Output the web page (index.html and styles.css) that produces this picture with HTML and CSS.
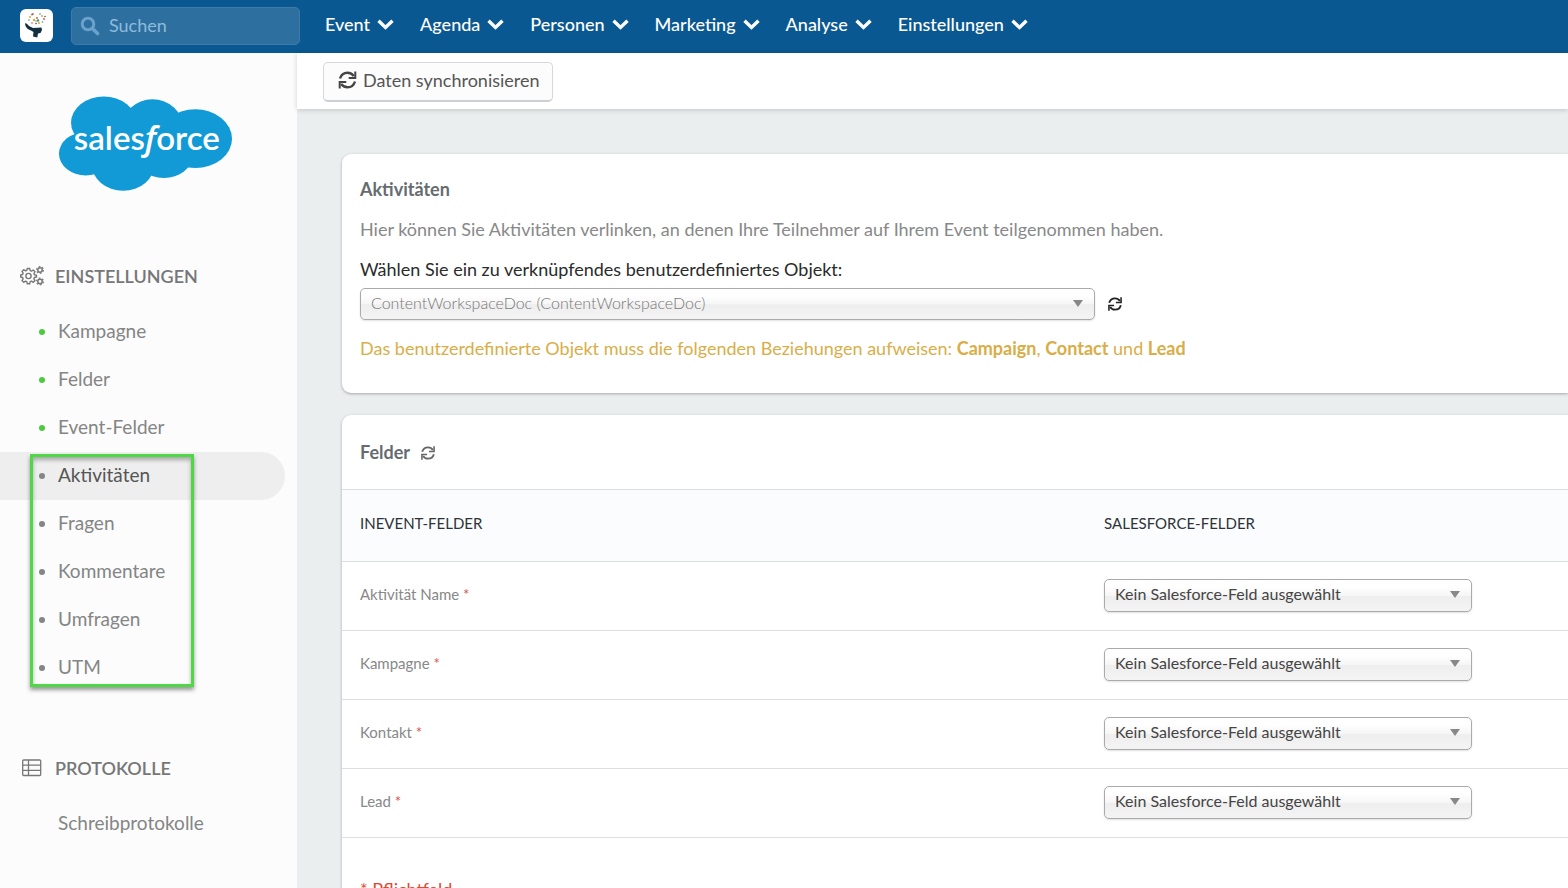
FILE: index.html
```html
<!DOCTYPE html>
<html lang="de">
<head>
<meta charset="utf-8">
<meta name="viewport" content="width=device-width, initial-scale=1">
<title>Salesforce – Aktivitäten</title>
<link rel="stylesheet" href="styles.css">
</head>
<body>
<svg class="sprite" aria-hidden="true">
  <symbol id="sync" viewBox="0 0 18 18">
    <path d="M1.5 7.5C2.6 3.8 5.500 1.700 9 1.700c2.700 0 5 1.300 6.300 3.400M16.500 10.500c-1.100 3.700-4 5.800-7.500 5.800-2.700 0-5-1.300-6.300-3.400" fill="none" stroke="currentColor" stroke-width="2.400"/>
    <path d="M16.800.4v6.600h-6.600M1.200 17.600V11h6.600" fill="none" stroke="currentColor" stroke-width="2"/>
  </symbol>
  <symbol id="chevron" viewBox="0 0 17 11">
    <path d="M1.500 1.800 8.500 8.500 15.500 1.800" fill="none" stroke="currentColor" stroke-width="3.400"/>
  </symbol>
</svg>

<header class="topbar">
  <a class="brand" href="#" aria-label="Startseite">
    <svg viewBox="0 0 33 33" width="33" height="33" aria-hidden="true">
      <path d="M5 14.500c1-.5 2 .5 3 1.500 1.500 1.500 3 2 5 3l8.500-.5.5 2.500-1.500 3-2.500.5-.7 4-4.300-1 .5-4.500-2.500-1.500C8 20.500 5.500 18.500 5 14.500z" fill="#12303f"/>
      <g fill="#e0aa2e"><circle cx="10" cy="8" r="1"/><circle cx="14" cy="11" r="1.200"/><circle cx="19" cy="14" r="1"/><circle cx="22" cy="7" r="1"/></g>
      <g fill="#d94f4a"><circle cx="12" cy="5.500" r=".9"/><circle cx="24" cy="10" r=".9"/><circle cx="17" cy="9" r=".9"/><circle cx="12" cy="14" r=".8"/></g>
      <g fill="#3c9c86"><circle cx="18" cy="11.500" r="1.200"/><circle cx="20" cy="5" r=".8"/><circle cx="9" cy="11" r=".8"/><circle cx="22.500" cy="13" r=".8"/></g>
      <g fill="#1e3440"><circle cx="13" cy="5" r=".7"/><circle cx="16" cy="14.500" r=".7"/><circle cx="25" cy="7.500" r=".7"/><circle cx="16" cy="12" r=".6"/></g>
    </svg>
  </a>
  <label class="search">
    <svg viewBox="0 0 20 20" width="20" height="20" aria-hidden="true"><circle cx="8" cy="8" r="5.800" fill="none" stroke="currentColor" stroke-width="3"/><path d="m12.500 12.500 5 5" stroke="currentColor" stroke-width="3.600" stroke-linecap="round"/></svg>
    <input type="search" placeholder="Suchen" aria-label="Suchen">
  </label>
  <nav class="menu" aria-label="Hauptmenü">
    <button type="button">Event <svg class="chev"><use href="#chevron"/></svg></button>
    <button type="button">Agenda <svg class="chev"><use href="#chevron"/></svg></button>
    <button type="button">Personen <svg class="chev"><use href="#chevron"/></svg></button>
    <button type="button">Marketing <svg class="chev"><use href="#chevron"/></svg></button>
    <button type="button">Analyse <svg class="chev"><use href="#chevron"/></svg></button>
    <button type="button">Einstellungen <svg class="chev"><use href="#chevron"/></svg></button>
  </nav>
</header>

<div class="layout">
  <aside class="sidebar">
    <svg class="salesforce" viewBox="28 33 518 283" role="img" aria-label="salesforce">
      <g fill="#129ad7">
        <ellipse cx="162" cy="112" rx="98" ry="78"/>
        <ellipse cx="308" cy="128" rx="92" ry="86"/>
        <ellipse cx="436" cy="160" rx="110" ry="88"/>
        <ellipse cx="108" cy="205" rx="80" ry="65"/>
        <ellipse cx="220" cy="236" rx="94" ry="80"/>
        <ellipse cx="342" cy="208" rx="86" ry="70"/>
        <path d="M100 120h320v100H100z"/>
      </g>
      <text x="291" y="194" text-anchor="middle" class="salesforce-text">sales<tspan class="salesforce-f">f</tspan>orce</text>
    </svg>

    <h2 class="side-title">
      <svg viewBox="0 0 24 20" width="24" height="20" aria-hidden="true" fill="none" stroke="currentColor">
        <circle cx="8.500" cy="10" r="2.600" stroke-width="1.400"/>
        <path stroke-width="1.400" stroke-linejoin="round" d="M7.300 2.500h2.400l.5 2.100 1.300.5 1.800-1.100 1.700 1.700-1.100 1.800.5 1.300 2.100.5v1.700l-2.100.5-.5 1.300 1.100 1.800-1.700 1.700-1.800-1.100-1.300.5-.5 2.100H7.300l-.5-2.100-1.300-.5-1.800 1.100L2 14.600l1.100-1.800-.5-1.300L.7 11V9l1.900-.5.5-1.300L2 5.400l1.700-1.700 1.800 1.100 1.300-.5z"/>
        <circle cx="20" cy="4" r="2.200" stroke-width="1.500"/><circle cx="20" cy="4" r="3.400" stroke-width="1.200" stroke-dasharray="1.800 1.760"/>
        <circle cx="20" cy="15.500" r="2.200" stroke-width="1.500"/><circle cx="20" cy="15.500" r="3.400" stroke-width="1.200" stroke-dasharray="1.800 1.760"/>
      </svg>
      EINSTELLUNGEN
    </h2>
    <ul class="side-list done">
      <li><a href="#">Kampagne</a></li>
      <li><a href="#">Felder</a></li>
      <li><a href="#">Event-Felder</a></li>
    </ul>
    <ul class="side-list marked">
      <li><a href="#" class="active" aria-current="page">Aktivitäten</a></li>
      <li><a href="#">Fragen</a></li>
      <li><a href="#">Kommentare</a></li>
      <li><a href="#">Umfragen</a></li>
      <li><a href="#">UTM</a></li>
    </ul>

    <h2 class="side-title logs">
      <svg viewBox="0 0 24 20" width="24" height="20" aria-hidden="true" fill="none" stroke="currentColor" stroke-width="1.300"><rect x="2.700" y="2" width="18" height="15.500" rx="1"/><path d="M2.700 7.200h18M2.700 12.300h18M8.500 2v15.500"/></svg>
      PROTOKOLLE
    </h2>
    <ul class="side-list plain">
      <li><a href="#">Schreibprotokolle</a></li>
    </ul>
  </aside>

  <main class="content">
    <div class="toolbar">
      <button type="button" class="sync-button"><svg class="icon-large"><use href="#sync"/></svg>Daten synchronisieren</button>
    </div>
    <div class="cards">
      <section class="card activities">
        <h1>Aktivitäten</h1>
        <p class="intro">Hier können Sie Aktivitäten verlinken, an denen Ihre Teilnehmer auf Ihrem Event teilgenommen haben.</p>
        <label class="question" for="object">Wählen Sie ein zu verknüpfendes benutzerdefiniertes Objekt:</label>
        <div class="object-row">
          <span class="select wide"><select id="object"><option>ContentWorkspaceDoc (ContentWorkspaceDoc)</option></select></span>
          <button type="button" class="refresh dark" aria-label="Objekte aktualisieren"><svg class="icon-small"><use href="#sync"/></svg></button>
        </div>
        <p class="warning">Das benutzerdefinierte Objekt muss die folgenden Beziehungen aufweisen: <strong>Campaign</strong>, <strong>Contact</strong> und <strong>Lead</strong></p>
      </section>

      <section class="card">
        <div class="card-head">
          <h2>Felder</h2>
          <button type="button" class="refresh" aria-label="Felder aktualisieren"><svg class="icon-small"><use href="#sync"/></svg></button>
        </div>
        <table class="fields">
          <thead><tr><th scope="col">INEVENT-FELDER</th><th scope="col">SALESFORCE-FELDER</th></tr></thead>
          <tbody>
            <tr><td><label for="f1">Aktivität Name <span class="req">*</span></label></td><td><span class="select"><select id="f1"><option>Kein Salesforce-Feld ausgewählt</option></select></span></td></tr>
            <tr><td><label for="f2">Kampagne <span class="req">*</span></label></td><td><span class="select"><select id="f2"><option>Kein Salesforce-Feld ausgewählt</option></select></span></td></tr>
            <tr><td><label for="f3">Kontakt <span class="req">*</span></label></td><td><span class="select"><select id="f3"><option>Kein Salesforce-Feld ausgewählt</option></select></span></td></tr>
            <tr><td><label for="f4">Lead <span class="req">*</span></label></td><td><span class="select"><select id="f4"><option>Kein Salesforce-Feld ausgewählt</option></select></span></td></tr>
          </tbody>
        </table>
        <p class="required-note">* Pflichtfeld</p>
      </section>
    </div>
  </main>
</div>
</body>
</html>
```
FILE: styles.css
```css
*, *::before, *::after { box-sizing: border-box; }
body {
  margin: 0;
  height: 100vh;
  overflow: hidden;
  display: flex;
  flex-direction: column;
  font-family: Lato, "Open Sans", sans-serif;
  font-size: 18px;
  line-height: 24px;
  color: #333;
  background: #ebeeef;
}
h1, h2, p, ul { margin: 0; padding: 0; }
button, input, select { font: inherit; }
button { cursor: pointer; }
a { color: inherit; text-decoration: none; }
.sprite { display: none; }

.topbar {
  flex: none;
  display: flex;
  align-items: center;
  height: 53px;
  padding: 0 20px 2px;
  background: #0a5891;
}
.brand {
  display: block;
  height: 33px;
  border-radius: 6px;
  background: #fff;
}
.search {
  display: flex;
  align-items: center;
  gap: 9px;
  width: 229px;
  height: 38px;
  margin-left: 18px;
  padding: 0 8px;
  border: 1px solid #3f7ba8;
  border-radius: 5px;
  background: #2d6f9f;
  color: #6ba1cb;
}
.search svg { flex: none; }
.search input {
  min-width: 0;
  width: 100%;
  padding: 0 0 2px;
  border: 0;
  outline: 0;
  background: none;
  color: #fff;
}
.search input::placeholder { color: #8dbbdc; opacity: 1; }
.menu {
  display: flex;
  gap: 26px;
  margin-left: 25px;
}
.menu button {
  display: flex;
  align-items: center;
  gap: 7px;
  padding: 0 0 3px;
  border: 0;
  background: none;
  color: #fff;
  font-weight: 500;
}
.chev { width: 17px; height: 11px; }

.layout {
  flex: 1;
  min-height: 0;
  display: flex;
}
.sidebar {
  flex: none;
  width: 297px;
  background: #fcfcfc;
  color: #848585;
}
.salesforce {
  display: block;
  width: 173px;
  height: 95px;
  margin: 43px 0 73px 59px;
}
.salesforce-text {
  font-family: Lato, sans-serif;
  font-size: 99px;
  font-weight: 600;
  fill: #fff;
}
.salesforce-f {
  font-family: "Open Sans", sans-serif;
  font-style: italic;
}
.side-title {
  display: flex;
  align-items: center;
  gap: 11px;
  margin-bottom: 20px;
  padding-left: 20px;
  font-size: 18px;
  line-height: 24px;
  font-weight: 600;
  color: #777;
}
.side-title.logs { margin-top: 64px; }
.side-list { list-style: none; font-size: 19px; }
.side-list a {
  display: flex;
  align-items: center;
  height: 48px;
  margin-right: 12px;
  padding: 0 0 2px 39px;
}
.side-list a::before {
  content: "";
  width: 6px;
  height: 6px;
  margin: 2px 13px 0 0;
  border-radius: 50%;
  background: #848585;
}
.done a::before { background: #4ccb3e; }
.plain a::before { background: none; }
.side-list .active {
  border-radius: 0 24px 24px 0;
  background: #eee;
  color: #555;
}
.marked { position: relative; }
.marked::after {
  content: "";
  position: absolute;
  top: 2px;
  bottom: 5px;
  left: 30px;
  width: 164px;
  border: 3px solid #4fd846;
  box-shadow: 0 3px 4px rgba(0, 0, 0, .4), inset 0 3px 4px rgba(0, 0, 0, .3);
  pointer-events: none;
}

.content {
  flex: 1;
  min-width: 0;
  display: flex;
  flex-direction: column;
}
.toolbar {
  flex: none;
  padding: 9px 26px 7px;
  background: #fff;
  box-shadow: 0 1px 5px rgba(0, 0, 0, .18);
}
.sync-button {
  display: flex;
  align-items: center;
  gap: 6px;
  height: 40px;
  padding: 0 12px 3px 14px;
  border: 1px solid #d5d8dc;
  border-bottom: 2px solid #cdd0d3;
  border-radius: 5px;
  background: #fcfcfc;
  color: #555;
}
.icon-large { width: 19px; height: 18px; color: #444; }
.icon-small { display: block; width: 14px; height: 14px; }

.cards {
  display: flex;
  flex-direction: column;
  gap: 22px;
  padding: 45px 0 0 45px;
}
.card {
  border-radius: 9px 0 0 9px;
  background: #fff;
  box-shadow: 0 1px 3px rgba(0, 0, 0, .3);
}
.activities { padding: 23px 18px 33px; }
.card h1, .card h2 {
  font-size: 18px;
  line-height: 24px;
  font-weight: 700;
  color: #666b70;
}
.intro { margin-top: 16px; color: #888; }
.question { display: block; margin-top: 16px; color: #2b2b2b; }
.object-row {
  display: flex;
  align-items: center;
  gap: 13px;
  margin: 7px 0 16px;
}
.refresh {
  padding: 0;
  border: 0;
  background: none;
  color: #666;
}
.refresh.dark { color: #222; }
.warning { color: #d9ae48; }

.select {
  position: relative;
  display: block;
  width: 368px;
  max-width: 100%;
}
.select.wide { width: 735px; }
.select select {
  appearance: none;
  display: block;
  width: 100%;
  height: 33px;
  padding: 0 30px 2px 10px;
  border: 1px solid #aaa;
  border-radius: 5px;
  background: linear-gradient(#fff 20%, #f6f6f6 50%, #eee 52%, #f4f4f4 100%);
  box-shadow: 0 1px 2px rgba(0, 0, 0, .12);
  color: #444;
  font-size: 16px;
}
.select.wide select { height: 32px; color: #777; font-weight: 300; }
.select::after {
  content: "";
  position: absolute;
  top: 12px;
  right: 12px;
  border: 5px solid transparent;
  border-top: 7px solid #888;
  border-bottom: 0;
  pointer-events: none;
}

.card-head {
  display: flex;
  align-items: center;
  gap: 11px;
  padding: 25px 18px;
}
.card-head .refresh { padding-top: 2px; }
.fields {
  width: 100%;
  border-collapse: collapse;
  table-layout: fixed;
  font-size: 15px;
}
.fields th, .fields td {
  padding: 0 18px 2px 2px;
  border: solid #dcdfe1;
  border-width: 1px 0;
  text-align: left;
}
.fields th:first-child, .fields td:first-child { width: 62%; padding-left: 18px; }
.fields th {
  height: 72px;
  padding-bottom: 6px;
  background: #fafcfe;
  color: #2e3338;
  font-weight: 400;
}
.fields td { height: 69px; color: #888; }
.fields label { display: block; padding-bottom: 3px; }
.req { color: #d9534f; }
.required-note { padding: 39px 18px; color: #dd4b39; }
```
